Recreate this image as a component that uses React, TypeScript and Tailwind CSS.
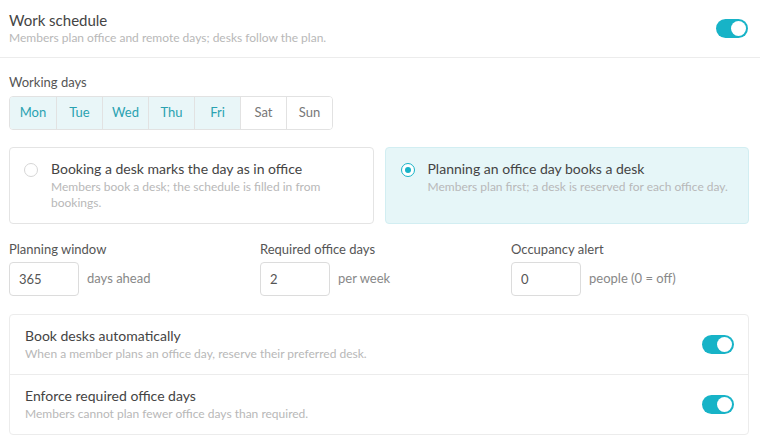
import { useState } from 'react'

const DAYS = ['Mon', 'Tue', 'Wed', 'Thu', 'Fri', 'Sat', 'Sun']

function Toggle({ on }: { on: boolean }) {
  return (
    <span
      className={`flex items-center w-[32px] h-[19px] rounded-full p-[2px] ${
        on ? 'bg-[#17b3c7] justify-end' : 'bg-gray-300 justify-start'
      }`}
    >
      <span className="block w-[15px] h-[15px] rounded-full bg-white" />
    </span>
  )
}

function Radio({ checked }: { checked: boolean }) {
  return checked ? (
    <span className="flex items-center justify-center w-[14px] h-[14px] rounded-full border border-[#17b3c7] bg-white shrink-0">
      <span className="block w-[6px] h-[6px] rounded-full bg-[#17b3c7]" />
    </span>
  ) : (
    <span className="block w-[14px] h-[14px] rounded-full border border-[#d6d6d6] bg-white shrink-0" />
  )
}

function NumberField({ label, value, unit }: { label: string; value: string; unit: string }) {
  return (
    <div className="flex flex-col gap-[4px]">
      <span className="text-[13px] text-[#555] leading-[17px]">{label}</span>
      <div className="flex items-center gap-[8px]">
        <input
          className="w-[70px] h-[34px] px-[9px] border border-[#dcdcdc] rounded-[4px] text-[13px] text-[#555] focus:outline-none"
          defaultValue={value}
        />
        <span className="text-[13px] text-[#888]">{unit}</span>
      </div>
    </div>
  )
}

function ModeCard({
  active,
  title,
  text,
  padX,
}: {
  active: boolean
  title: string
  text: string
  padX: string
}) {
  return (
    <div
      className={`flex gap-[13px] h-[77px] ${padX} pt-[11px] rounded-[4px] border ${
        active ? 'bg-[#e6f6f8] border-[#d2eef2]' : 'bg-white border-[#e4e4e4]'
      }`}
    >
      <div className="pt-[4px]">
        <Radio checked={active} />
      </div>
      <div className="flex flex-col">
        <span className="text-[14px] text-[#444] leading-[19px]">{title}</span>
        <span className="text-[12px] text-[#b8b8b8] leading-[16px] mt-[1px]">{text}</span>
      </div>
    </div>
  )
}

export default function App() {
  const [mode] = useState<'booking' | 'planning'>('planning')
  const workDays = ['Mon', 'Tue', 'Wed', 'Thu', 'Fri']

  return (
    <div className="w-[760px] h-[448px] bg-white overflow-hidden font-['Lato',sans-serif]">
      <div className="flex items-center justify-between pl-[9px] pr-[12px] pt-[10px] pb-[11px] border-b border-[#ececec]">
        <div className="flex flex-col">
          <span className="text-[15px] text-[#444] leading-[20px]">Work schedule</span>
          <span className="text-[12px] text-[#b8b8b8] leading-[16px]">
            Members plan office and remote days; desks follow the plan.
          </span>
        </div>
        <Toggle on />
      </div>

      <div className="flex flex-col pl-[9px] pr-[11px] pt-[16px]">
        <span className="text-[13px] text-[#555] leading-[17px]">Working days</span>
        <div className="flex mt-[5px] w-fit border border-[#e2e2e2] rounded-[4px] overflow-hidden">
          {DAYS.map((d, i) => {
            const on = workDays.includes(d)
            return (
              <span
                key={d}
                className={`flex items-center justify-center w-[46px] h-[32px] text-[13px] ${
                  i > 0 ? 'border-l border-[#e2e2e2]' : ''
                } ${on ? 'bg-[#e9f6f8] text-[#2aa2b1]' : 'bg-white text-[#777]'}`}
              >
                {d}
              </span>
            )
          })}
        </div>

        <div className="grid grid-cols-2 gap-[11px] mt-[17px]">
          <ModeCard
            active={mode === 'booking'}
            padX="px-[14px]"
            title="Booking a desk marks the day as in office"
            text="Members book a desk; the schedule is filled in from bookings."
          />
          <ModeCard
            active={mode === 'planning'}
            padX="px-[15px]"
            title="Planning an office day books a desk"
            text="Members plan first; a desk is reserved for each office day."
          />
        </div>

        <div className="grid grid-cols-[251px_251px_1fr] mt-[17px]">
          <NumberField label="Planning window" value="365" unit="days ahead" />
          <NumberField label="Required office days" value="2" unit="per week" />
          <NumberField label="Occupancy alert" value="0" unit="people (0 = off)" />
        </div>

        <div className="flex flex-col mt-[18px] border border-[#ececec] rounded-[4px]">
          <div className="flex items-center justify-between h-[60px] pl-[15px] pr-[14px] border-b border-[#ececec]">
            <div className="flex flex-col">
              <span className="text-[14px] text-[#444] leading-[18px]">Book desks automatically</span>
              <span className="text-[12px] text-[#b8b8b8] leading-[16px] mt-[1px]">
                When a member plans an office day, reserve their preferred desk.
              </span>
            </div>
            <Toggle on />
          </div>
          <div className="flex items-center justify-between h-[59px] pl-[15px] pr-[14px]">
            <div className="flex flex-col">
              <span className="text-[14px] text-[#444] leading-[18px]">Enforce required office days</span>
              <span className="text-[12px] text-[#b8b8b8] leading-[16px] mt-[1px]">
                Members cannot plan fewer office days than required.
              </span>
            </div>
            <Toggle on />
          </div>
        </div>
      </div>
    </div>
  )
}
